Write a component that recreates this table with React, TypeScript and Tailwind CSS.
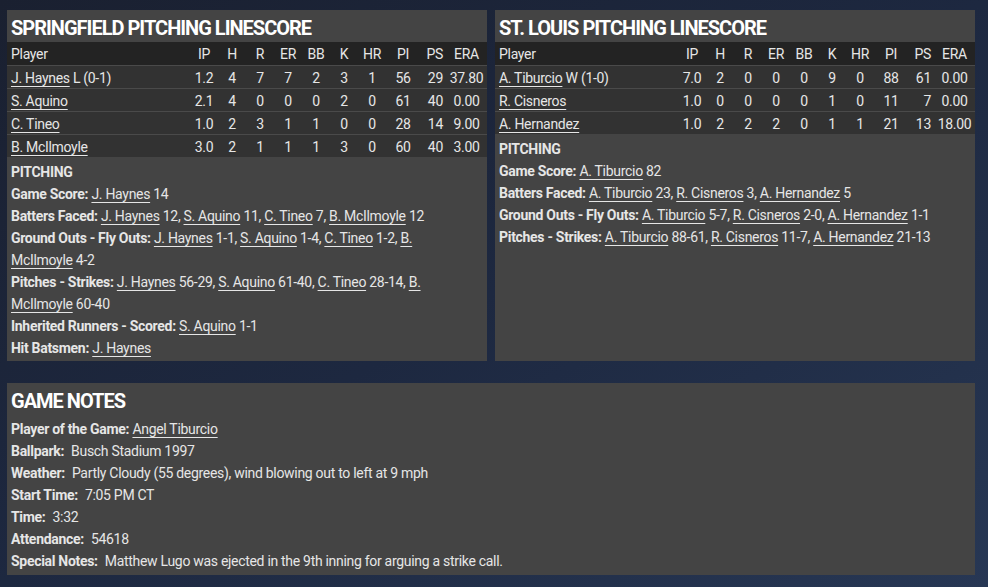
import React from "react";

type Row = {
  name: string;
  note?: string;
  ip: string;
  h: number;
  r: number;
  er: number;
  bb: number;
  k: number;
  hr: number;
  pi: number;
  ps: number;
  era: string;
};

type Part = string | { link: string };
type Line = { label: string; parts: Part[] };

const springfield: Row[] = [
  { name: "J. Haynes", note: "L (0-1)", ip: "1.2", h: 4, r: 7, er: 7, bb: 2, k: 3, hr: 1, pi: 56, ps: 29, era: "37.80" },
  { name: "S. Aquino", ip: "2.1", h: 4, r: 0, er: 0, bb: 0, k: 2, hr: 0, pi: 61, ps: 40, era: "0.00" },
  { name: "C. Tineo", ip: "1.0", h: 2, r: 3, er: 1, bb: 1, k: 0, hr: 0, pi: 28, ps: 14, era: "9.00" },
  { name: "B. McIlmoyle", ip: "3.0", h: 2, r: 1, er: 1, bb: 1, k: 3, hr: 0, pi: 60, ps: 40, era: "3.00" },
];

const stlouis: Row[] = [
  { name: "A. Tiburcio", note: "W (1-0)", ip: "7.0", h: 2, r: 0, er: 0, bb: 0, k: 9, hr: 0, pi: 88, ps: 61, era: "0.00" },
  { name: "R. Cisneros", ip: "1.0", h: 0, r: 0, er: 0, bb: 0, k: 1, hr: 0, pi: 11, ps: 7, era: "0.00" },
  { name: "A. Hernandez", ip: "1.0", h: 2, r: 2, er: 2, bb: 0, k: 1, hr: 1, pi: 21, ps: 13, era: "18.00" },
];

const springfieldLines: Line[] = [
  { label: "Game Score:", parts: [{ link: "J. Haynes" }, " 14"] },
  {
    label: "Batters Faced:",
    parts: [{ link: "J. Haynes" }, " 12, ", { link: "S. Aquino" }, " 11, ", { link: "C. Tineo" }, " 7, ", { link: "B. McIlmoyle" }, " 12"],
  },
  {
    label: "Ground Outs - Fly Outs:",
    parts: [{ link: "J. Haynes" }, " 1-1, ", { link: "S. Aquino" }, " 1-4, ", { link: "C. Tineo" }, " 1-2, ", { link: "B. McIlmoyle" }, " 4-2"],
  },
  {
    label: "Pitches - Strikes:",
    parts: [{ link: "J. Haynes" }, " 56-29, ", { link: "S. Aquino" }, " 61-40, ", { link: "C. Tineo" }, " 28-14, ", { link: "B. McIlmoyle" }, " 60-40"],
  },
  { label: "Inherited Runners - Scored:", parts: [{ link: "S. Aquino" }, " 1-1"] },
  { label: "Hit Batsmen:", parts: [{ link: "J. Haynes" }] },
];

const stlouisLines: Line[] = [
  { label: "Game Score:", parts: [{ link: "A. Tiburcio" }, " 82"] },
  {
    label: "Batters Faced:",
    parts: [{ link: "A. Tiburcio" }, " 23, ", { link: "R. Cisneros" }, " 3, ", { link: "A. Hernandez" }, " 5"],
  },
  {
    label: "Ground Outs - Fly Outs:",
    parts: [{ link: "A. Tiburcio" }, " 5-7, ", { link: "R. Cisneros" }, " 2-0, ", { link: "A. Hernandez" }, " 1-1"],
  },
  {
    label: "Pitches - Strikes:",
    parts: [{ link: "A. Tiburcio" }, " 88-61, ", { link: "R. Cisneros" }, " 11-7, ", { link: "A. Hernandez" }, " 21-13"],
  },
];

const Link = ({ children }: { children: React.ReactNode }) => (
  <span className="underline underline-offset-[3px] decoration-1">{children}</span>
);

function PitchingTable({ title, rows, lines }: { title: string; rows: Row[]; lines: Line[] }) {
  return (
    <div className="bg-[#444444] w-[480px] h-[351px] flex flex-col">
      <h2 className="text-[20px] font-bold text-white px-1 h-[32px] leading-[36px] tracking-[-1px]">{title}</h2>
      <table className="table-fixed w-full text-[14px] text-[#e6e6e6] border-collapse tracking-[-0.3px]">
        <colgroup>
          <col className="w-[183px]" />
          <col className="w-[28px]" />
          <col className="w-[28px]" />
          <col className="w-[28px]" />
          <col className="w-[28px]" />
          <col className="w-[28px]" />
          <col className="w-[28px]" />
          <col className="w-[28px]" />
          <col className="w-[34px]" />
          <col className="w-[26px]" />
          <col className="w-[41px]" />
        </colgroup>
        <thead>
          <tr className="bg-[#232323] h-[23px]">
            <th className="text-left font-normal pl-1 pt-[2px]">Player</th>
            {["IP", "H", "R", "ER", "BB", "K", "HR", "PI"].map((c) => (
              <th key={c} className="font-normal text-center pt-[2px]">{c}</th>
            ))}
            <th className="font-normal text-right pr-[3px] pt-[2px]">PS</th>
            <th className="font-normal text-center pt-[2px]">ERA</th>
          </tr>
        </thead>
        <tbody>
          {rows.map((r) => (
            <tr key={r.name} className="bg-[#323232] h-[22px] border-t border-[#4a4a4a] [&>td]:pt-[2px] [&>td]:leading-[20px]">
              <td className="pl-1 whitespace-nowrap">
                <Link>{r.name}</Link>
                {r.note && <span> {r.note}</span>}
              </td>
              <td className="text-center">{r.ip}</td>
              <td className="text-center">{r.h}</td>
              <td className="text-center">{r.r}</td>
              <td className="text-center">{r.er}</td>
              <td className="text-center">{r.bb}</td>
              <td className="text-center">{r.k}</td>
              <td className="text-center">{r.hr}</td>
              <td className="text-center">{r.pi}</td>
              <td className="text-right pr-[3px]">{r.ps}</td>
              <td className="text-center">{r.era}</td>
            </tr>
          ))}
        </tbody>
      </table>
      <div className="pl-1 pr-[12px] pt-[4px] text-[14px] leading-[22px] text-[#e6e6e6] tracking-[-0.3px]">
        <div className="font-bold">PITCHING</div>
        {lines.map((l) => (
          <div key={l.label}>
            <span className="font-bold">{l.label}</span>{" "}
            {l.parts.map((p, i) =>
              typeof p === "string" ? <span key={i}>{p}</span> : <Link key={i}>{p.link}</Link>
            )}
          </div>
        ))}
      </div>
    </div>
  );
}

const notes: { label: string; value: string; link?: boolean }[] = [
  { label: "Player of the Game:", value: "Angel Tiburcio", link: true },
  { label: "Ballpark:", value: "Busch Stadium 1997" },
  { label: "Weather:", value: "Partly Cloudy (55 degrees), wind blowing out to left at 9 mph" },
  { label: "Start Time:", value: "7:05 PM CT" },
  { label: "Time:", value: "3:32" },
  { label: "Attendance:", value: "54618" },
  { label: "Special Notes:", value: "Matthew Lugo was ejected in the 9th inning for arguing a strike call." },
];

export default function App() {
  return (
    <div
      className="w-[988px] h-[587px] overflow-hidden bg-gradient-to-br from-[#1a2030] via-[#1d2840] to-[#273754] pt-[10px] pl-[7px]"
      style={{ fontFamily: "Roboto, 'Noto Sans', sans-serif" }}
    >
      <div className="flex gap-[8px]">
        <PitchingTable title="SPRINGFIELD PITCHING LINESCORE" rows={springfield} lines={springfieldLines} />
        <PitchingTable title="ST. LOUIS PITCHING LINESCORE" rows={stlouis} lines={stlouisLines} />
      </div>
      <div className="mt-[22px] bg-[#444444] w-[968px] h-[192px] px-1 text-[14px] text-[#e6e6e6] tracking-[-0.3px]">
        <h2 className="text-[20px] font-bold text-white h-[35px] leading-[36px] tracking-[-1px]">GAME NOTES</h2>
        <div className="leading-[22px]">
          {notes.map((n) => (
            <div key={n.label}>
              <span className="font-bold">{n.label}</span>
              {n.link ? (
                <>
                  {" "}
                  <Link>{n.value}</Link>
                </>
              ) : (
                <span className="pl-[7px]">{n.value}</span>
              )}
            </div>
          ))}
        </div>
      </div>
    </div>
  );
}
